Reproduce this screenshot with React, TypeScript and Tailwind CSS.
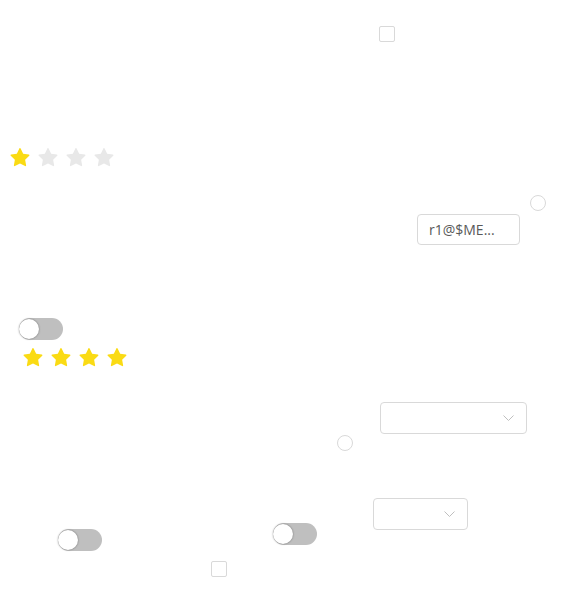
import React from 'react';

const STAR_PATH =
  'M908.1 353.1l-253.9-36.9L540.7 86.1c-3.1-6.3-8.2-11.4-14.5-14.5-15.8-7.8-35-1.3-42.9 14.5L369.8 316.2l-253.9 36.9c-7 1-13.4 4.3-18.3 9.3a32.05 32.05 0 00.6 45.3l183.7 179.1-43.4 252.9a31.95 31.95 0 0046.4 33.7L512 754l227.1 119.4c6.2 3.3 13.4 4.4 20.3 3.2 17.4-3 29.1-19.5 26.1-36.9l-43.4-252.9 183.7-179.1c5-4.9 8.3-11.3 9.3-18.3 2.7-17.5-9.5-33.7-27-36.3z';

const Star = ({ on }: { on: boolean }) => (
  <svg viewBox="64 64 896 896" className={`w-5 h-5 ${on ? 'fill-[#fadb14]' : 'fill-[#e8e8e8]'}`}>
    <path d={STAR_PATH} />
  </svg>
);

const Rate = ({ value, className }: { value: number; className: string }) => (
  <div className={`absolute flex gap-2 ${className}`}>
    {[0, 1, 2, 3].map((i) => (
      <Star key={i} on={i < value} />
    ))}
  </div>
);

const Checkbox = ({ className }: { className: string }) => (
  <span className={`absolute w-4 h-4 rounded-[2px] border border-[#d9d9d9] bg-white ${className}`} />
);

const Radio = ({ className }: { className: string }) => (
  <span className={`absolute w-4 h-4 rounded-full border border-[#d9d9d9] bg-white ${className}`} />
);

const Toggle = ({ className }: { className: string }) => (
  <div className={`absolute w-[44px] h-[22px] rounded-full bg-[#bfbfbf] ${className}`}>
    <span className="absolute left-0 top-[1px] w-5 h-5 rounded-full bg-white shadow-[0_0_2px_rgba(0,0,0,0.45)]" />
  </div>
);

const Chevron = () => (
  <svg width="11" height="6" viewBox="0 0 11 6" fill="none" stroke="#bfbfbf" strokeWidth="1">
    <path d="M0.5 0.5 L5.5 5.5 L10.5 0.5" />
  </svg>
);

const Select = ({ className }: { className: string }) => (
  <div
    className={`absolute h-8 rounded border border-[#d9d9d9] bg-white flex items-center justify-end pr-3 ${className}`}
  >
    <Chevron />
  </div>
);

export default function App() {
  return (
    <div className="relative w-[584px] h-[609px] bg-white overflow-hidden font-['Open_Sans',sans-serif]">
      <Checkbox className="left-[379px] top-[26px]" />

      <Rate value={1} className="left-[10px] top-[148px]" />

      <Radio className="left-[530px] top-[195px]" />

      <div className="absolute left-[417px] top-[214px] w-[103px] h-[31px] rounded border border-[#d9d9d9] bg-white flex items-center px-[11px] text-[14px] text-[#595959]">
        r1@$ME...
      </div>

      <Toggle className="left-[19px] top-[318px]" />

      <Rate value={4} className="left-[23px] top-[348px]" />

      <Select className="left-[380px] top-[402px] w-[147px]" />

      <Radio className="left-[337px] top-[435px]" />

      <Select className="left-[373px] top-[498px] w-[95px]" />

      <Toggle className="left-[273px] top-[523px]" />

      <Toggle className="left-[58px] top-[529px]" />

      <Checkbox className="left-[211px] top-[561px]" />
    </div>
  );
}
